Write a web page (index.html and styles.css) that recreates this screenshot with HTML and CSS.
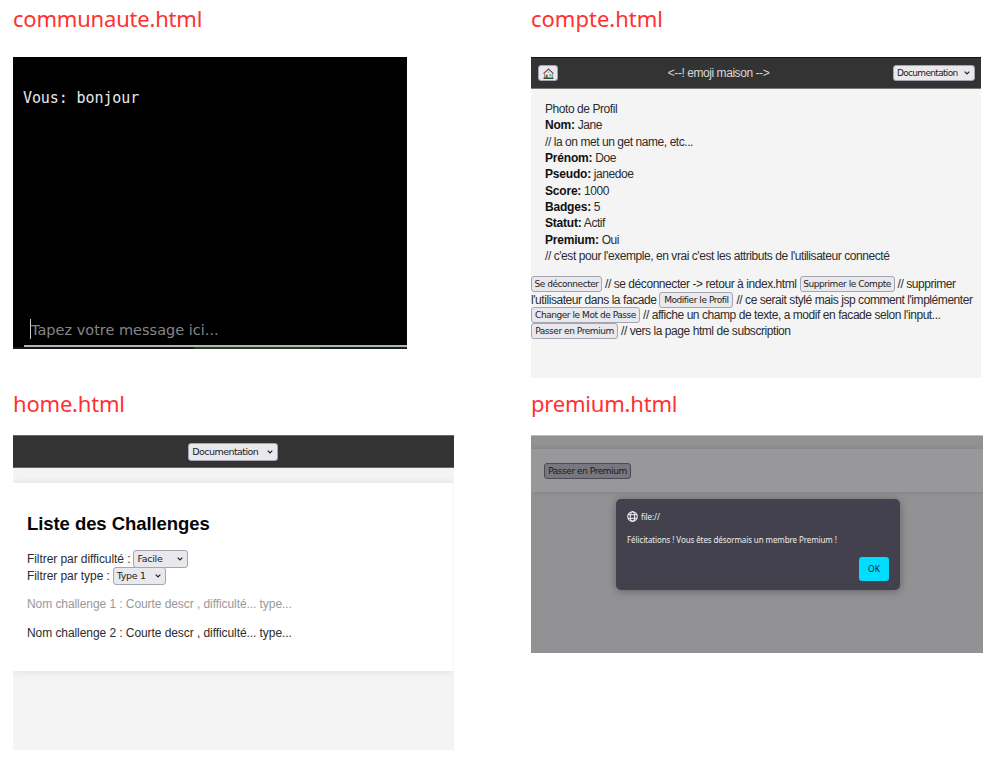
FILE: index.html
```html
<!DOCTYPE html>
<html lang="fr">
<head>
<meta charset="utf-8">
<title>Pages</title>
<link rel="stylesheet" href="styles.css">
</head>
<body>
<main class="board">
  <section class="page">
    <h1 class="label">communaute.html</h1>
    <div class="chat">
      <p class="chat-line">Vous: bonjour</p>
      <div class="chat-input"><i class="caret"></i><span>Tapez votre message ici...</span></div>
      <div class="chat-edge"></div>
    </div>
  </section>
  <section class="page">
    <h1 class="label wide">compte.html</h1>
    <div class="account">
      <header class="bar account-bar">
        <button class="home" aria-label="Accueil">
          <svg viewBox="0 0 10 10" width="11" height="11"><path d="M1.500 5 5 1.500 8.500 5v4h-7z" fill="#e9f2f3"/><path d="M.5 5.200 5 .9l4.500 4.300" fill="none" stroke="#8f3a36" stroke-width="1"/><path d="M1.500 5v4M8.500 5v4" stroke="#555" stroke-width=".6"/><path d="M2.300 6h2v3h-2z" fill="#e23b2e"/><path d="M5.500 5.500h2.200v2.200H5.500zM4.200 3.200h1.600v1.300H4.200z" fill="#55cbe0"/><path d="M.5 9.300h9" stroke="#123f1b" stroke-width="1.200"/></svg>
        </button>
        <span class="bar-title">&lt;--! emoji maison --&gt;</span>
        <button class="select doc"><span>Documentation</span><svg class="chev" viewBox="0 0 6 4"><path d="M.7.7 3 3 5.300.7"/></svg></button>
      </header>
      <div class="info">
        <p>Photo de Profil</p>
        <p><b>Nom:</b> Jane</p>
        <p>// la on met un get name, etc...</p>
        <p><b>Prénom:</b> Doe</p>
        <p><b>Pseudo:</b> janedoe</p>
        <p><b>Score:</b> 1000</p>
        <p><b>Badges:</b> 5</p>
        <p><b>Statut:</b> Actif</p>
        <p><b>Premium:</b> Oui</p>
        <p>// c'est pour l'exemple, en vrai c'est les attributs de l'utilisateur connecté</p>
      </div>
      <div class="actions">
        <p><button class="b1">Se déconnecter</button><span>// se déconnecter -&gt; retour à index.html</span><button class="b2">Supprimer le Compte</button><span>// supprimer</span></p>
        <p><span>l'utilisateur dans la facade</span><button class="b3">Modifier le Profil</button><span>// ce serait stylé mais jsp comment l'implémenter</span></p>
        <p><button class="b4">Changer le Mot de Passe</button><span>// affiche un champ de texte, a modif en facade selon l'input...</span></p>
        <p><button class="b5">Passer en Premium</button><span>// vers la page html de subscription</span></p>
      </div>
    </div>
  </section>
  <section class="page">
    <h1 class="label">home.html</h1>
    <div class="challenges">
      <header class="bar home-bar"><button class="select doc"><span>Documentation</span><svg class="chev" viewBox="0 0 6 4"><path d="M.7.7 3 3 5.300.7"/></svg></button></header>
      <div class="card">
        <h2>Liste des Challenges</h2>
        <p class="filter"><span>Filtrer par difficulté :</span><button class="select s1"><span>Facile</span><svg class="chev" viewBox="0 0 6 4"><path d="M.7.7 3 3 5.300.7"/></svg></button></p>
        <p class="filter"><span>Filtrer par type :</span><button class="select s2"><span>Type 1</span><svg class="chev" viewBox="0 0 6 4"><path d="M.7.7 3 3 5.300.7"/></svg></button></p>
        <p class="item off">Nom challenge 1 : Courte descr , difficulté... type...</p>
        <p class="item">Nom challenge 2 : Courte descr , difficulté... type...</p>
      </div>
    </div>
  </section>
  <section class="page">
    <h1 class="label">premium.html</h1>
    <div class="premium">
      <div class="strip"><button>Passer en Premium</button></div>
      <div class="dialog">
        <div class="origin"><svg viewBox="0 0 12 12" width="11" height="11"><g fill="none" stroke="#f4f4f6" stroke-width="1.100"><circle cx="6" cy="6" r="5.200"/><ellipse cx="6" cy="6" rx="2.400" ry="5.200"/><path d="M1 4.200h10M1 7.800h10"/></g></svg><span>file://</span></div>
        <p>Félicitations ! Vous êtes désormais un membre Premium !</p>
        <button class="ok">OK</button>
      </div>
    </div>
  </section>
</main>
</body>
</html>
```
FILE: styles.css
```css
* { box-sizing: border-box; }
body { margin: 0; background: #fff; color: #2c2c2c; font: 12px/16px "Liberation Sans", sans-serif; overflow: hidden; }
h1, h2, p { margin: 0; font-weight: normal; }
p, span, button { white-space: nowrap; }
.board { display: grid; grid-template-columns: 518px 463px; grid-template-rows: 385px 377px; padding-left: 13px; }
.label { color: #ff3131; font: 22px/30px "Noto Sans", sans-serif; letter-spacing: -.2px; padding-top: 3px; height: 57px; }
.label.wide { letter-spacing: 0; }
.page:nth-child(n+3) .label { height: 50px; }

.chat { width: 394px; height: 292px; background: #000; padding-top: 32px; display: flex; flex-direction: column; }
.chat-line { color: #e8e8e8; font: 15px/18px "DejaVu Sans Mono", monospace; letter-spacing: -.1px; padding-left: 10px; }
.chat-input { margin: auto 0 0 11px; height: 29px; padding-left: 6px; border-bottom: 2px solid #b4b4b4; color: #858585; font: 14.500px/24px "DejaVu Sans", sans-serif; display: flex; }
.caret { width: 1px; height: 20px; margin-top: 1px; background: #ccc; }
.chat-edge { height: 2px; background: linear-gradient(90deg, #17171f 46%, #1d4022 46% 78%, #15231e 78%); }

button { font: 9px/12px "DejaVu Sans", sans-serif; letter-spacing: -.45px; color: #1c1c22; background: #e9e9ed; border: 1px solid #a5a4b3; border-radius: 3px; padding: 0; display: inline-flex; align-items: center; justify-content: center; flex: none; }
.bar { background: #333; display: flex; align-items: center; }
.select { justify-content: space-between; padding: 0 4px 0 3px; }
.chev { width: 6px; height: 4px; fill: none; stroke: #222; stroke-width: 1.200; }
.doc { width: 82px; height: 16px; letter-spacing: -.68px; }

.account { width: 450px; height: 321px; background: #f4f4f4; letter-spacing: -.44px; }
.account-bar { height: 32px; padding: 0 6px 0 7px; color: #d8d8d8; border-top: 1px solid #151515; border-bottom: 1px solid #777; justify-content: space-between; }
.bar-title { margin-right: 14px; }
.home { width: 20px; height: 16px; }
.info { padding: 12px 0 0 14px; height: 187px; }
.info p { height: 16.330px; line-height: 17px; }
.info b { color: #111; letter-spacing: -.2px; }
.actions p { height: 15.700px; display: flex; align-items: center; gap: 3px; }
.actions button { height: 16px; }
.b1 { width: 71px; } .b2 { width: 95px; } .b3 { width: 74px; } .b4 { width: 109px; } .b5 { width: 87px; }

.challenges { width: 440.500px; height: 315px; background: #f4f4f4; letter-spacing: -.07px; }
.home-bar { height: 33px; justify-content: center; border-top: 1px solid #666; border-bottom: 1px solid #666; }
.challenges .select { height: 18px; font-size: 9.500px; letter-spacing: -.3px; }
.challenges .doc { width: 90px; letter-spacing: -.55px; }
.card { margin-top: 15px; height: 188px; padding: 27px 14px 0; background: #fff; box-shadow: 0 0 8px #0000001a; clip-path: inset(-10px 0); }
.card h2 { font: bold 18.500px/28px "Liberation Sans", sans-serif; color: #050505; height: 40px; }
.filter { height: 17px; display: flex; align-items: center; gap: 3px; }
.s1 { width: 55px; } .s2 { width: 53px; }
.item { margin-top: 11px; line-height: 18px; }
.off { color: #989898; }

.premium { width: 452px; height: 218px; background: #929294; padding-top: 13px; border-top: 1px solid #bbb; }
.strip { height: 43px; padding: 14px 13px; background: #98989a; box-shadow: 0 0 5px #0002; clip-path: inset(-8px 0); display: flex; }
.strip button { width: 87px; height: 16px; background: #77777d; border-color: #4b4b57; }
.dialog { width: 284px; height: 91px; margin: 7px 0 0 85px; padding: 12px 11px 10px; border-radius: 5px; background: #42414d; box-shadow: 0 1px 8px #0005; color: #eee; display: grid; grid-template-rows: 11px 37px 24px; font: 8px/12px "Noto Sans", sans-serif; letter-spacing: -.1px; }
.origin { display: flex; align-items: center; gap: 3px; }
.dialog p { padding-top: 12px; }
.ok { justify-self: end; width: 30px; height: 24px; margin-top: -2px; background: #00ddff; border: 0; font: 8.500px/12px "Noto Sans", sans-serif; letter-spacing: 0; }
```
